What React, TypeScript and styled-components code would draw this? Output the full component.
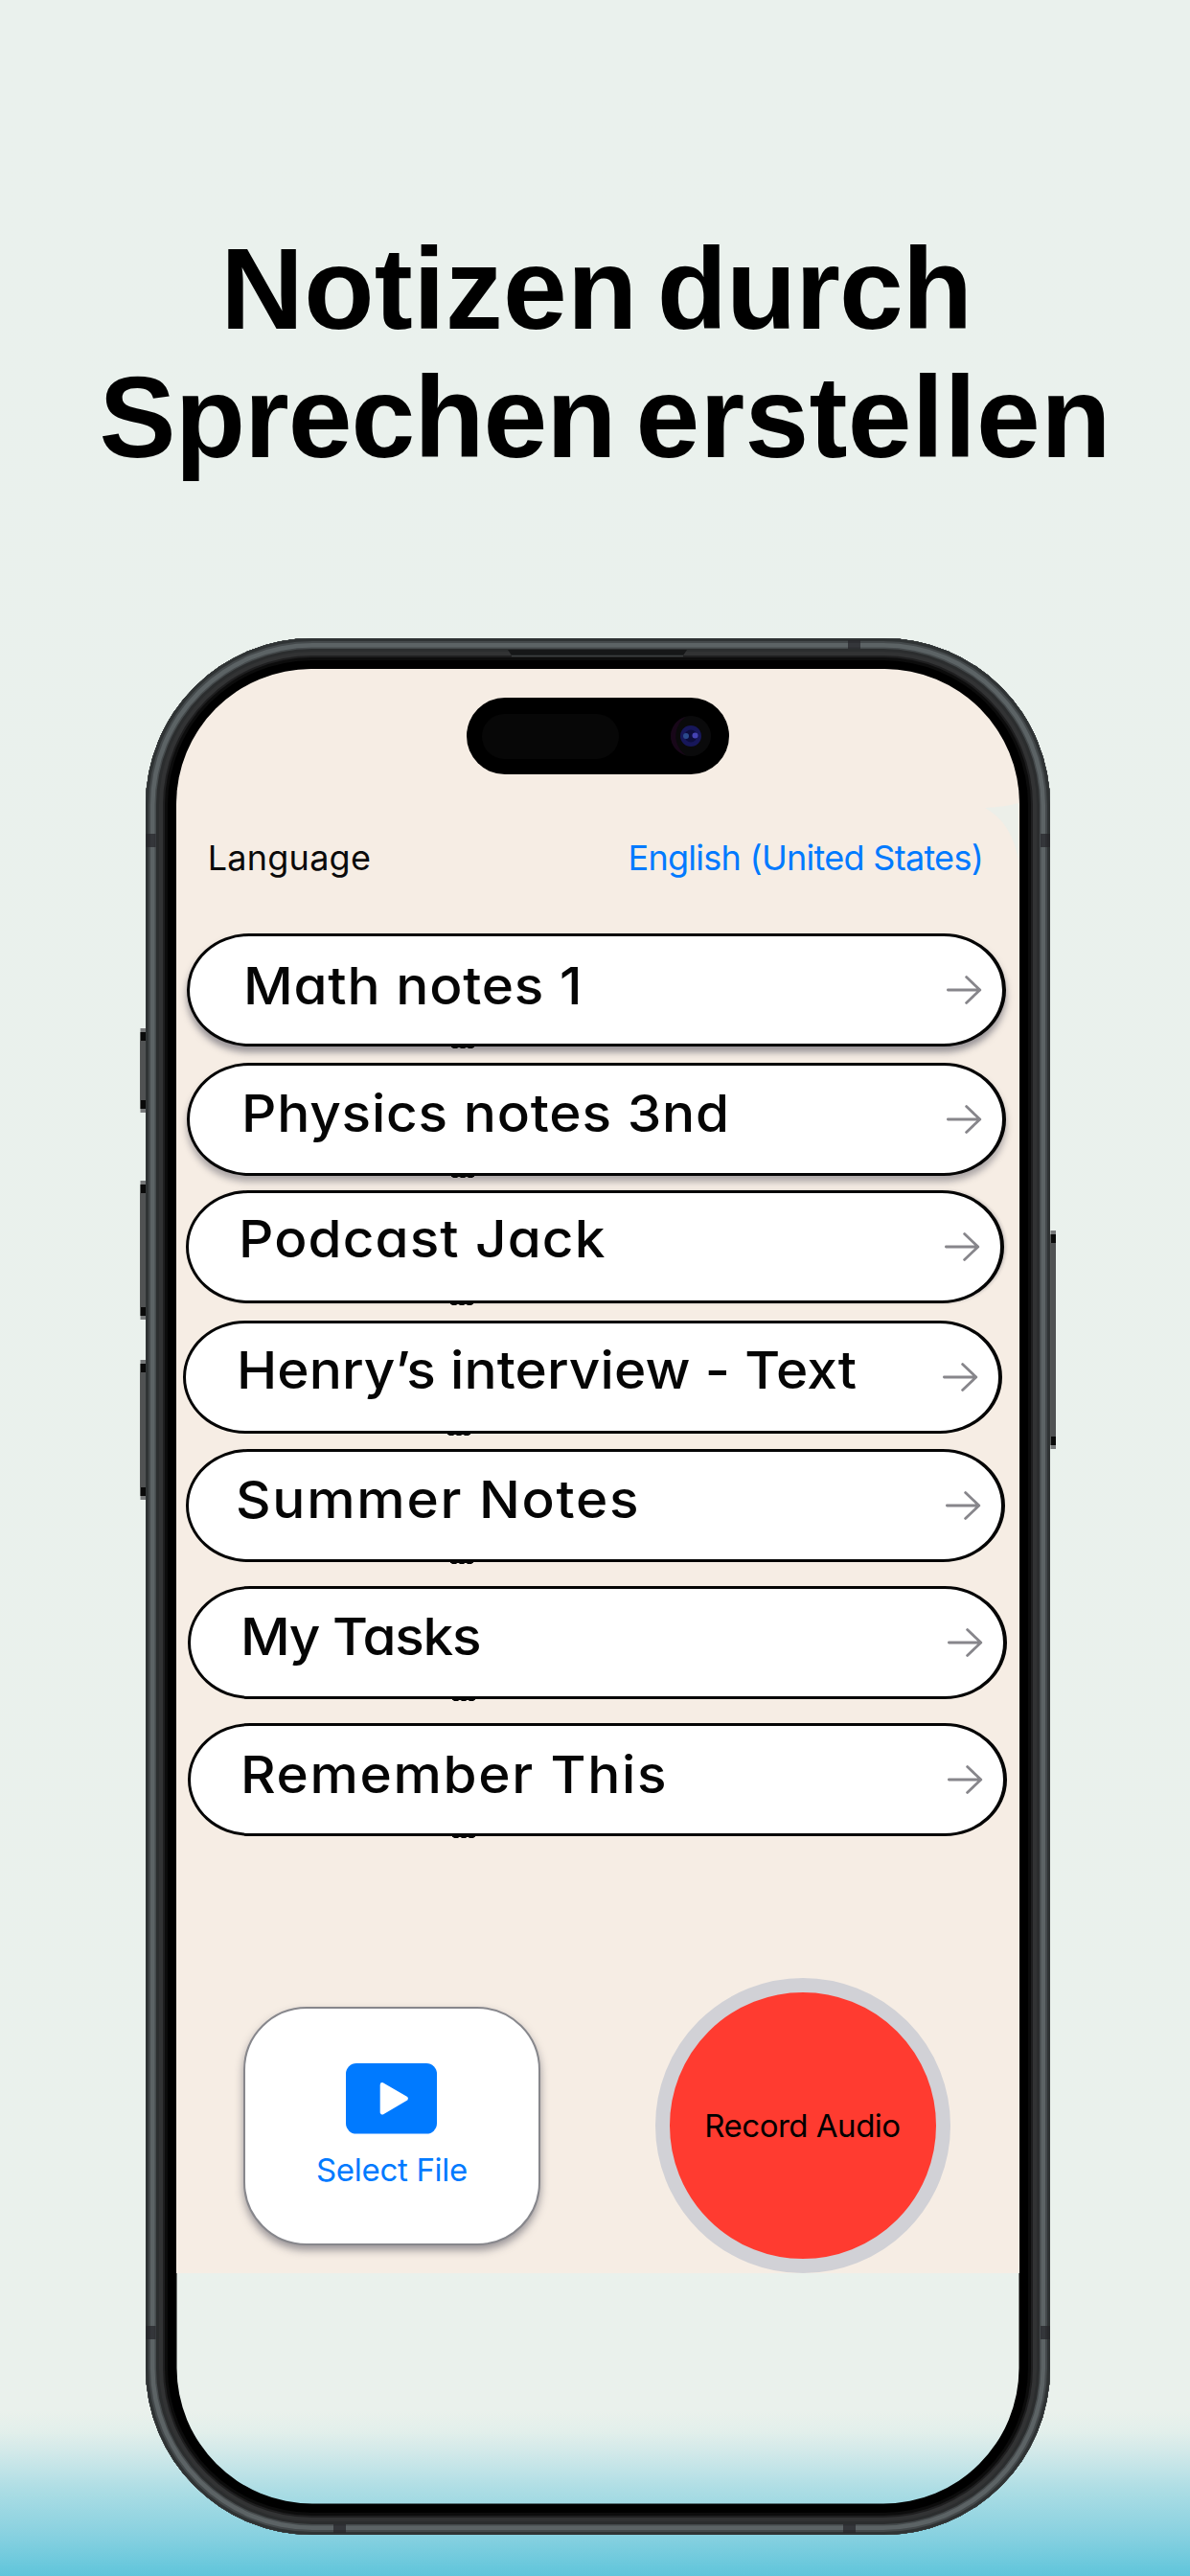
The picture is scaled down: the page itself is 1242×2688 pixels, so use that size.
import React, { useState } from 'react';
import styled, { createGlobalStyle } from 'styled-components';

interface Note {
    id: number;
    title: string;
    gap: number;
    shift: number;
    textX: number;
    textY: number;
    spacing: number;
    shadow?: string;
};

const notes: Note[] = [
    { id: 1, title: 'Math notes 1', gap: 61, shift: 11, textX: 59.3, textY: 28.7, spacing: 0.74, shadow: '0 6px 7px rgba(60, 60, 75, 0.5)' },
    { id: 2, title: 'Physics notes 3nd', gap: 17, shift: 11, textX: 57, textY: 26.4, spacing: 0.76, shadow: '0 6px 7px rgba(60, 60, 75, 0.4)' },
    { id: 3, title: 'Podcast Jack', gap: 15, shift: 9.5, textX: 55.2, textY: 24.4, spacing: 1.06, shadow: '2px 0 3px rgba(60, 60, 75, 0.2)' },
    { id: 4, title: 'Henry’s interview - Text', gap: 18, shift: 7, textX: 56.3, textY: 25.1, spacing: 0.1 },
    { id: 5, title: 'Summer Notes', gap: 16, shift: 10, textX: 52.2, textY: 26.4, spacing: 1.65 },
    { id: 6, title: 'My Tasks', gap: 25.5, shift: 12, textX: 55, textY: 25.9, spacing: -1.2 },
    { id: 7, title: 'Remember This', gap: 25.2, shift: 12, textX: 55.3, textY: 26.7, spacing: 1.57 },
];

const arrow = (
    <svg width="40" height="34" viewBox="0 0 40 34" fill="none" stroke="#87868b" strokeWidth="2.8" strokeLinecap="round" strokeLinejoin="round">
        <path d="M3.4 17H36.6M22.6 3.6L36.8 17L22.6 30.4" />
    </svg>
);

const video = (
    <svg width="95" height="74" viewBox="0 0 95 74">
        <rect width="95" height="73.6" rx="11" fill="#007aff" />
        <path d="M38 22.4L62.6 36.8L38 51.2Z" fill="#fff" stroke="#fff" strokeWidth="4.6" strokeLinejoin="round" />
    </svg>
);

const camera = (
    <svg width="44" height="44" viewBox="0 0 44 44">
        <circle cx="22" cy="22" r="21" fill="#0a0a0b" />
        <path d="M17 2A20.5 20.5 0 0 0 17 42A24 24 0 0 1 17 2Z" fill="#180719" />
        <circle cx="22" cy="22" r="11" fill="#17175a" />
        <circle cx="22" cy="22" r="6.5" fill="#0d0d3c" />
        <circle cx="17" cy="22" r="3" fill="#2a4a8c" />
        <circle cx="26.5" cy="21.5" r="3" fill="#4543b4" />
    </svg>
);

const keys = [
    { x: -5.5, y: 407, height: 88 },
    { x: -5.5, y: 566, height: 145 },
    { x: -5.5, y: 753, height: 146 },
    { x: 944.5, y: 618, height: 228 },
];

// side keys, antenna bands and the earpiece slot
const bezel = (
    <>
        {keys.map((key) => (
            <g key={key.y}>
                <rect x={key.x} y={key.y} width="5.5" height={key.height} fill="#77797a" />
                <rect x={key.x} y={key.y + 4} width="5.5" height={key.height - 8} fill="#0a0a0a" />
                <rect x={key.x} y={key.y + 13} width="5.5" height={key.height - 26} fill="#505253" />
            </g>
        ))}
        <g fill="#232428" fillOpacity="0.7">
            <rect x="0.5" y="204" width="10" height="14" />
            <rect x="934" y="204" width="10" height="14" />
            <rect x="0.5" y="1761" width="10" height="14" />
            <rect x="934" y="1761" width="10" height="14" />
            <rect x="733" y="2" width="13" height="9" />
            <rect x="196" y="1968" width="13" height="9" />
            <rect x="728" y="1968" width="13" height="9" />
        </g>
        <path d="M378 12H565L561 18H382Z" fill="#161718" />
        <path d="M382 18.5H561" stroke="#3d4041" strokeWidth="1.5" />
        <path d="M876 177Q898 176 911 172V232Q904 192 876 177Z" fill="#ecefe9" />
    </>
);

function NoteList() {
    const [list] = useState(notes);

    return (
        <List>
            {list.map((note) => {
                return (
                    <NoteRow key={note.id} $gap={note.gap} $shift={note.shift} $shadow={note.shadow}>
                        <NoteTitle $x={note.textX} $y={note.textY} $spacing={note.spacing}>{note.title}</NoteTitle>
                        {arrow}
                    </NoteRow>
                );
            })}
        </List>
    );
}

function App() {
    return (
        <Page>
            <GlobalStyle />
            <Headline>
                <HeadlineLine>
                    <Word>Notizen</Word> <Word $tight>durch</Word>
                </HeadlineLine>
                <HeadlineLine $second>
                    <Word $tight>Sprechen</Word> <Word>erstellen</Word>
                </HeadlineLine>
            </Headline>
            <Phone>
                <Hardware viewBox="0 0 944.5 1979.5">{bezel}</Hardware>
                <Screen>
                    <Island>
                        <Sensor />
                        {camera}
                    </Island>
                    <LanguageBar>
                        <Label>Language</Label>
                        <LanguageButton>English (United States)</LanguageButton>
                    </LanguageBar>
                    <NoteList />
                    <Actions>
                        <SelectFile>
                            {video}
                            <span>Select File</span>
                        </SelectFile>
                        <RecordAudio>Record Audio</RecordAudio>
                    </Actions>
                </Screen>
            </Phone>
        </Page>
    );
}

const GlobalStyle = createGlobalStyle`
    body {
        margin: 0;
    }
    button {
        border: 0;
        padding: 0;
        background: none;
        font: inherit;
    }
`;

const Page = styled.div`
    box-sizing: border-box;
    display: flex;
    flex-direction: column;
    gap: 163.4px;
    width: 1242px;
    height: 2688px;
    padding: 234.4px 0 0 151.7px;
    overflow: hidden;
    font-family: Inter, "Liberation Sans", sans-serif;
    background: linear-gradient(
        180deg,
        #eaf1ed 0,
        #eaf1ec 2516px,
        #e2efeb 2538px,
        #cfe8e9 2562px,
        #a9dce4 2602px,
        #88d1e0 2645px,
        #5fc5db 2688px
    );
`;

const Headline = styled.h1`
    display: flex;
    flex-direction: column;
    align-items: center;
    width: 941px;
    margin: 0;
    color: #000;
    font: bold 120px/134px "Liberation Sans", Arial, sans-serif;
    white-space: nowrap;
`;

const HeadlineLine = styled.span<{ $second?: boolean }>`
    display: flex;
    gap: ${(props) => (props.$second ? 21 : 20)}px;
    padding-left: ${(props) => (props.$second ? 19 : 0)}px;
`;

const Word = styled.span<{ $tight?: boolean }>`
    letter-spacing: ${(props) => (props.$tight ? '-1px' : '0.3px')};
`;

const Phone = styled.div`
    position: relative;
    flex-shrink: 0;
    box-sizing: border-box;
    width: 944.5px;
    height: 1979.5px;
    padding: 32.5px;
    border-radius: 174px;
    box-shadow:
        inset 0 0 0 3px #2f3334,
        inset 0 0 0 5px #44494b,
        inset 0 0 0 9.5px #5c6365,
        inset 0 0 0 11px #454a4c,
        inset 0 0 0 14px #2b2d2e,
        inset 0 0 0 18px #323334,
        inset 0 0 0 20px #1e1e1f,
        inset 0 0 0 23px #0c0c0c,
        inset 0 0 0 32.5px #000;
`;

const Hardware = styled.svg`
    position: absolute;
    inset: 0;
    width: 100%;
    height: 100%;
    overflow: visible;
`;

const Screen = styled.div`
    display: flex;
    flex-direction: column;
    box-sizing: border-box;
    height: 1674px;
    padding-top: 30px;
    border-radius: 141px 141px 0 0;
    background: #f6ede4;
`;

const Island = styled.div`
    box-sizing: border-box;
    display: flex;
    align-items: center;
    align-self: center;
    justify-content: space-between;
    width: 274px;
    height: 80px;
    padding: 0 17.5px 0 16px;
    border-radius: 40px;
    background: #000;
`;

const Sensor = styled.div`
    width: 143px;
    height: 47px;
    border-radius: 24px;
    background: #070707;
`;

const LanguageBar = styled.div`
    display: flex;
    justify-content: space-between;
    padding: 68.5px 37.6px 0 32.5px;
    font-size: 36px;
    line-height: 36px;
`;

const Label = styled.span`
    color: #0a0a0a;
    letter-spacing: 0.25px;
`;

const LanguageButton = styled.button`
    color: #007aff;
    letter-spacing: -0.72px;
`;

const List = styled.div`
    display: flex;
    flex-direction: column;
`;

const NoteRow = styled.div<{ $gap: number; $shift: number; $shadow?: string }>`
    position: relative;
    z-index: 1;
    box-sizing: border-box;
    display: flex;
    align-items: center;
    justify-content: space-between;
    width: 854.5px;
    height: 118px;
    margin: ${(props) => props.$gap}px 0 0 ${(props) => props.$shift}px;
    padding-right: 20px;
    border: 3px solid #050505;
    border-right-width: 4px;
    border-radius: 65px / 59px;
    background: #fff;
    box-shadow: ${(props) => props.$shadow || 'none'};

    &::after {
        content: "";
        position: absolute;
        left: 273px;
        bottom: -5px;
        width: 24px;
        height: 3px;
        background: radial-gradient(ellipse 5px 3px at 50% 0, #050505 95%, transparent) 0 0 / 8px 3px;
    }
`;

const NoteTitle = styled.span<{ $x: number; $y: number; $spacing: number }>`
    align-self: flex-start;
    margin-left: ${(props) => props.$x - 3}px;
    padding-top: ${(props) => props.$y - 3}px;
    color: #050505;
    font-size: 54px;
    font-weight: 500;
    line-height: 54px;
    font-feature-settings: "cv11";
    letter-spacing: ${(props) => props.$spacing}px;
    white-space: nowrap;
    transform: scaleX(1.05);
    transform-origin: left;
`;

const Actions = styled.div`
    display: flex;
    align-items: center;
    justify-content: space-between;
    margin-top: auto;
    padding: 0 72.2px 0 70px;
    font-size: 33px;
    line-height: 33px;
`;

const SelectFile = styled.button`
    box-sizing: border-box;
    display: flex;
    flex-direction: column;
    align-items: center;
    gap: 21px;
    width: 309.5px;
    height: 249px;
    padding-top: 57px;
    border: 2px solid #87878c;
    border-radius: 66px;
    background: #fff;
    color: #007aff;
    letter-spacing: -0.3px;
    box-shadow: 0 5px 8px rgba(60, 60, 75, 0.5);
`;

const RecordAudio = styled.button`
    width: 308px;
    height: 308px;
    border: 15.5px solid #d1d1d6;
    border-radius: 50%;
    background: #ff3b30;
    color: #000;
    letter-spacing: -0.5px;
`;

export default App;
